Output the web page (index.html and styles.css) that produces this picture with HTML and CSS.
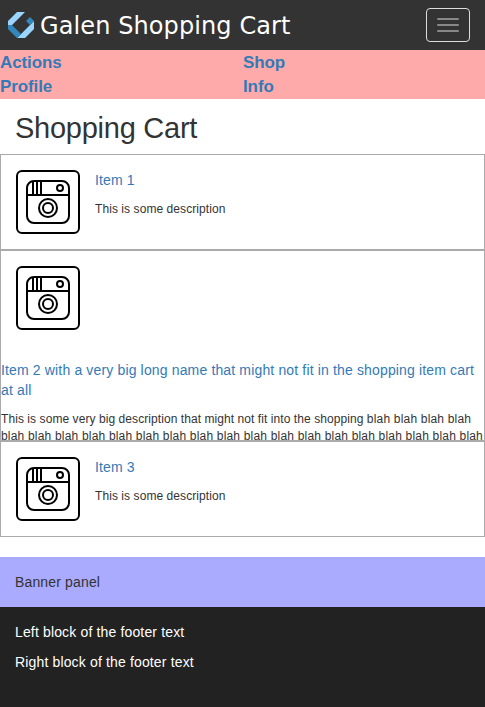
FILE: index.html
```html
<!DOCTYPE html>
<html lang="en">
<head>
<meta charset="utf-8">
<title>Galen Shopping Cart</title>
<link rel="stylesheet" href="styles.css">
</head>
<body>
<svg class="defs" aria-hidden="true">
  <symbol id="camera" viewBox="0 0 64 64">
    <g fill="none" stroke="#000" stroke-width="2">
      <rect x="1" y="1" width="62" height="62" rx="5"/>
      <rect x="11" y="11" width="42" height="42" rx="7"/>
      <path d="M11 25H53M17 11V25M21 11V25M25 11V25"/>
      <circle cx="44" cy="18" r="3"/>
      <circle cx="32" cy="38" r="9"/>
      <circle cx="32" cy="38" r="5"/>
    </g>
  </symbol>
</svg>
<header class="navbar">
  <a class="brand">
    <svg class="logo" viewBox="0 0 26 26">
      <path fill="#99d5ff" d="M0 13V9L9 0H17L4 13ZM26 9V17L17 26H9L22 13Z"/>
      <path fill="#3288bd" d="M0 13H4L13 22L9 26L0 17ZM18 9L22 5L26 9L22 13Z"/>
    </svg>
    <span class="brand-name">Galen Shopping Cart</span>
  </a>
  <button class="toggle" aria-label="Menu"><span class="bar"></span><span class="bar"></span><span class="bar"></span></button>
</header>
<nav class="menu"><a>Actions</a><a>Shop</a><a>Profile</a><a>Info</a></nav>
<main>
  <h1>Shopping Cart</h1>
  <section class="item">
    <svg class="thumb"><use href="#camera"/></svg>
    <div><a class="name">Item 1</a><p class="description">This is some description</p></div>
  </section>
  <section class="item item-long">
    <svg class="thumb"><use href="#camera"/></svg>
    <div><a class="name">Item 2 with a very big long name that might not fit in the shopping item cart at all</a><p class="description">This is some very big description that might not fit into the shopping <span class="filler">blah blah blah blah blah blah blah blah blah blah blah blah blah blah blah blah blah blah blah blah blah blah</span></p></div>
  </section>
  <section class="item">
    <svg class="thumb"><use href="#camera"/></svg>
    <div><a class="name">Item 3</a><p class="description">This is some description</p></div>
  </section>
</main>
<div class="banner">Banner panel</div>
<footer class="footer"><div>Left block of the footer text</div><div>Right block of the footer text</div></footer>
</body>
</html>
```
FILE: styles.css
```css
* { box-sizing: border-box; }
body {
  margin: 0;
  background: #fff;
  color: #333;
  font: 14px/20px "Liberation Sans", Arial, sans-serif;
  letter-spacing: .15px;
}
.defs { display: none; }
.navbar {
  display: flex;
  justify-content: space-between;
  height: 50px;
  padding: 8px 15px 8px 8px;
  background: #333;
}
.brand { display: flex; align-items: center; gap: 6px; color: #fff; }
.logo { width: 26px; height: 26px; }
.brand-name {
  padding-top: 2px;
  font: 24px/34px "DejaVu Sans", sans-serif;
  letter-spacing: .1px;
  white-space: nowrap;
}
.toggle {
  display: flex;
  flex-direction: column;
  gap: 4px;
  width: 44px;
  height: 34px;
  padding: 9px 10px;
  border: 1px solid #ddd;
  border-radius: 4px;
  background: transparent;
}
.bar { width: 22px; height: 2px; border-radius: 1px; background: #888; }
.menu {
  display: grid;
  grid-template-columns: 243px 1fr;
  align-content: start;
  height: 49px;
  padding-top: 1px;
  background: #faa;
  color: #337ab7;
  font-size: 17px;
  font-weight: bold;
  line-height: 24px;
  letter-spacing: -.1px;
}
h1 {
  margin: 15px 15px 11px;
  font-size: 29px;
  font-weight: normal;
  line-height: 29px;
  letter-spacing: -.25px;
}
.item {
  display: flex;
  gap: 15px;
  height: 96px;
  padding: 15px;
  border: 1px solid #aaa;
  overflow: hidden;
}
.item-long { flex-direction: column; gap: 30px; height: 191px; padding: 15px 0 0; }
.item-long .thumb { margin-left: 15px; }
.thumb { flex: none; width: 64px; height: 64px; }
.name { color: #337ab7; }
.description { margin: 11px 0 0; font-size: 12px; line-height: 17px; letter-spacing: .07px; }
.filler { letter-spacing: .19px; }
.banner { height: 50px; margin-top: 20px; padding: 15px; background: #aaf; }
.footer {
  display: flex;
  flex-direction: column;
  gap: 10px;
  height: 100px;
  padding: 15px;
  background: #222;
  color: #fff;
}
```
